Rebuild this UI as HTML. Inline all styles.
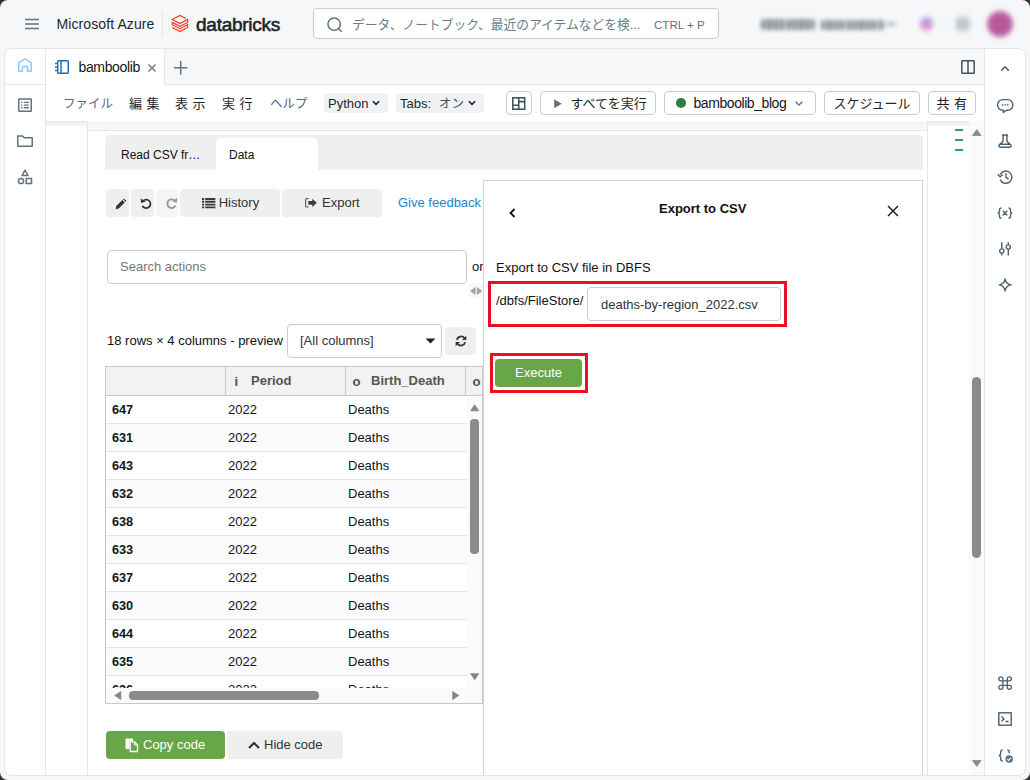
<!DOCTYPE html>
<html lang="ja">
<head>
<meta charset="utf-8">
<title>bamboolib - Databricks</title>
<style>
*{box-sizing:border-box;margin:0;padding:0}
html,body{width:1030px;height:780px;overflow:hidden}
body{background:#333;font-family:"Liberation Sans","Noto Sans CJK JP",sans-serif;color:#11171c;position:relative}
.abs{position:absolute}
#win{position:absolute;left:0;top:0;width:1030px;height:780px;background:#f6f7f9;border-radius:8px;overflow:hidden}
#panel{position:absolute;left:4px;top:48px;width:1022px;height:728px;background:#fff;border:1px solid #e3e7eb;border-radius:8px;overflow:hidden}
.t{position:absolute;white-space:nowrap;line-height:1}
.ui{font-family:"Liberation Sans","Noto Sans CJK JP",sans-serif}
svg{position:absolute;overflow:visible}
.btn{position:absolute;border:1px solid #c3cdd6;border-radius:4px;background:#fff}
.gbtn{position:absolute;background:#efefef;border-radius:4px}
.chip{position:absolute;background:#eff1f3;border-radius:4px}
.row{position:absolute;left:0;width:361px;height:28px;border-bottom:1px solid #dfe6ee}
.row span{position:absolute;top:7px;font-size:13px;line-height:14px;white-space:nowrap}
.row .a{left:6px;font-weight:bold;font-size:12.7px;top:6.6px}
.row .b{left:122px}
.row .c{left:242px}
</style>
</head>
<body>
<div id="win">

<!-- ===== top bar ===== -->
<svg id="e1" style="left:25px;top:18px" width="14" height="12" viewBox="0 0 14 12"><path d="M0 1.500h14M0 6h14M0 10.500h14" stroke="#5f7281" stroke-width="1.500" fill="none"/></svg>
<div class="t" id="msaz" style="left:56.5px;top:17.2px;font-size:14px;color:#1f272d;letter-spacing:0.1px">Microsoft Azure</div>
<div id="e2" class="abs" style="left:162px;top:12px;width:1px;height:24px;background:#e3e7eb"></div>
<svg id="dblogo" style="left:171px;top:14px" width="18" height="19" viewBox="171 14 18 19"><path d="M186 18.600L179.900 15.400L172.200 19.500L179.900 23.500L187.600 19.500V22.400L179.900 26.300L172.200 22.400V24.700L179.900 28.700L187.600 24.700V27.400L179.900 31.500L172.200 27.400" stroke="#ff3621" stroke-width="1.150" fill="none" stroke-linejoin="miter"/></svg>
<div class="t" id="dbtxt" style="left:196px;top:15.2px;font-size:19px;font-weight:normal;color:#1b2329;letter-spacing:-0.25px;-webkit-text-stroke:0.55px #1b2329">databricks</div>

<div id="e3" class="abs" style="left:313px;top:8px;width:406px;height:31px;background:#fff;border:1px solid #c3cdd6;border-radius:4px"></div>
<svg id="e4" style="left:327px;top:17px" width="16" height="16" viewBox="0 0 16 16"><circle cx="7.100" cy="7.100" r="6.200" stroke="#5f7281" stroke-width="1.500" fill="none"/><path d="M11.500 11.500l3.200 3.200" stroke="#5f7281" stroke-width="1.500"/></svg>
<div class="t" id="srch" style="left:352px;top:19px;font-size:12.75px;color:#6b7c8c">データ、ノートブック、最近のアイテムなどを検...</div>
<div class="t" id="ctrlp" style="left:654px;top:18.5px;font-size:11.6px;color:#5f7281">CTRL + P</div>

<!-- blurred workspace name etc -->
<div id="e5" class="abs" style="left:761px;top:18.500px;width:54px;height:11px;border-radius:3px;background:repeating-linear-gradient(90deg,#3d454c 0,#3d454c 4.200px,rgba(61,69,76,0.250) 4.200px,rgba(61,69,76,0.250) 6.400px);filter:blur(2.200px);opacity:.62"></div>
<div id="e5b" class="abs" style="left:821px;top:19.500px;width:64px;height:10px;border-radius:3px;background:repeating-linear-gradient(90deg,#3d454c 0,#3d454c 4.200px,rgba(61,69,76,0.250) 4.200px,rgba(61,69,76,0.250) 6.400px);filter:blur(2.200px);opacity:.6"></div>
<div id="e5c" class="abs" style="left:886px;top:22px;width:10px;height:4px;background:#7d858c;filter:blur(2px);opacity:.5"></div>
<div id="e6" class="abs" style="left:920px;top:16.500px;width:13px;height:14px;border-radius:7px;background:linear-gradient(#9a86f2,#ee7aa0);filter:blur(2.600px);opacity:.8"></div>
<div id="e7" class="abs" style="left:956px;top:16.500px;width:14px;height:14px;border-radius:3px;background:#a9b4c0;filter:blur(2.600px);opacity:.7"></div>
<div id="e8" class="abs" style="left:986.500px;top:10.500px;width:26px;height:26px;border-radius:14px;background:radial-gradient(#b9579a 55%,#cf8ab9);filter:blur(2.600px)"></div>

<!-- ===== main panel ===== -->
<div id="panel"></div>

<!-- left sidebar -->
<div id="e9" class="abs" style="left:45px;top:49px;width:1px;height:726px;background:#e3e7eb"></div>
<div id="e10" class="abs" style="left:5px;top:84px;width:40px;height:1px;background:#e3e7eb"></div>
<svg id="ic-home" style="left:18px;top:58px" width="14" height="14" viewBox="0 0 14 14"><path d="M0.750 13.250V4.700L7 0.800l6.250 3.900v8.550H9.600V8.600H4.400v4.650z" stroke="#8acaff" stroke-width="1.500" fill="none" stroke-linejoin="round"/></svg>
<svg id="ic-list" style="left:18px;top:98px" width="14" height="14" viewBox="0 0 14 14"><rect x="0.750" y="0.950" width="12.500" height="12.300" rx="0.500" stroke="#5f7281" stroke-width="1.500" fill="none"/><path d="M3.200 4.400h1.300M5.800 4.400h5M3.200 7.100h1.300M5.800 7.100h5M3.200 9.800h1.300M5.800 9.800h5" stroke="#5f7281" stroke-width="1.400"/></svg>
<svg id="ic-folder" style="left:17px;top:135px" width="16" height="12" viewBox="0 0 16 12"><path d="M0.750 0.950h4.900l1.600 1.900h8v8.400H0.750z" stroke="#5f7281" stroke-width="1.500" fill="none" stroke-linejoin="round"/></svg>
<svg id="ic-shapes" style="left:17px;top:169px" width="16" height="16" viewBox="0 0 16 16"><path d="M8 1.200l3 5.300H5z" stroke="#5f7281" stroke-width="1.500" fill="none" stroke-linejoin="round"/><circle cx="4" cy="12" r="2.600" stroke="#5f7281" stroke-width="1.500" fill="none"/><rect x="9.200" y="9.500" width="5.300" height="5" stroke="#5f7281" stroke-width="1.500" fill="none"/></svg>

<!-- tab row -->
<div id="e11" class="abs" style="left:164px;top:49px;width:821px;height:36px;background:#f6f7f9;border-bottom:1px solid #e3e7eb;border-left:1px solid #e3e7eb"></div>
<svg id="ic-nb" style="left:55px;top:60px" width="14" height="14" viewBox="0 0 14 14"><rect x="2.750" y="0.750" width="10.500" height="12.500" rx="0.800" stroke="#2272b4" stroke-width="1.500" fill="none"/><path d="M6 1v12M0 3.500h2.500M0 7h2.500M0 10.500h2.500" stroke="#2272b4" stroke-width="1.500"/></svg>
<div class="t" id="tabname" style="left:78.5px;top:60px;font-size:14px;color:#11171c;letter-spacing:-0.35px">bamboolib</div>
<svg id="e12" style="left:148px;top:63.500px" width="8" height="8" viewBox="0 0 8 8"><path d="M0.500 0.500l7 7M7.500 0.500l-7 7" stroke="#5f7281" stroke-width="1.250"/></svg>
<svg id="e13" style="left:174.300px;top:60.500px" width="13.400" height="13.400" viewBox="0 0 13.400 13.400"><path d="M6.700 0v13.400M0 6.700h13.400" stroke="#5f7281" stroke-width="1.500"/></svg>
<svg id="ic-split" style="left:961px;top:60px" width="14" height="14" viewBox="0 0 14 14"><rect x="0.800" y="0.800" width="12.400" height="12.400" rx="0.500" stroke="#445461" stroke-width="1.500" fill="none"/><path d="M7 1v12" stroke="#445461" stroke-width="1.500"/></svg>

<!-- right sidebar -->
<div id="e14" class="abs" style="left:984px;top:49px;width:1px;height:726px;background:#e3e7eb"></div>

<!-- toolbar row -->
<div id="e15" class="abs" style="left:46px;top:121px;width:938px;height:7px;background:linear-gradient(rgba(31,39,45,0.11),rgba(31,39,45,0.03) 60%,rgba(31,39,45,0))"></div>
<div class="t" id="m1" style="left:63px;top:98px;font-size:12.500px;color:#56677a">ファイル</div>
<div class="t" id="m2" style="left:129px;top:97px;font-size:13px;color:#1f272d;letter-spacing:4.5px">編集</div>
<div class="t" id="m3" style="left:175px;top:97px;font-size:13px;color:#1f272d;letter-spacing:4.5px">表示</div>
<div class="t" id="m4" style="left:222px;top:97px;font-size:13px;color:#1f272d;letter-spacing:4.5px">実行</div>
<div class="t" id="m5" style="left:270px;top:97.5px;font-size:12.500px;color:#56677a">ヘルプ</div>
<div id="e16" class="chip" style="left:324px;top:93px;width:64px;height:20px"></div>
<div class="t" id="py" style="left:328px;top:97px;font-size:13px;color:#1f272d">Python</div>
<svg id="e17" style="left:372px;top:100px" width="8" height="6" viewBox="0 0 8 6"><path d="M0.800 1.200l3.200 3.200 3.200-3.200" stroke="#1f272d" stroke-width="1.600" fill="none"/></svg>
<div id="e18" class="chip" style="left:396px;top:93px;width:88px;height:20px"></div>
<div class="t" id="tabs" style="left:400px;top:97px;font-size:13px;color:#1f272d">Tabs:</div><div class="t" id="tabs2" style="left:439px;top:97.5px;font-size:12.5px;color:#445461">オン</div>
<svg id="e19" style="left:468px;top:100px" width="8" height="6" viewBox="0 0 8 6"><path d="M0.800 1.200l3.200 3.200 3.200-3.200" stroke="#1f272d" stroke-width="1.600" fill="none"/></svg>

<div id="e20" class="btn" style="left:506px;top:91px;width:26px;height:24px"></div>
<svg id="e21" style="left:512px;top:96.5px" width="13.500" height="13" viewBox="0 0 13.500 13"><rect x="0.800" y="0.800" width="11.900" height="11.400" stroke="#445461" stroke-width="1.600" fill="none"/><path d="M6.750 1v11M1 8.300h5.750M6.750 4.600h6" stroke="#445461" stroke-width="1.600"/></svg>
<div id="e22" class="btn" style="left:540px;top:91px;width:116px;height:24px"></div>
<svg id="e23" style="left:554px;top:98.5px" width="8" height="9.500" viewBox="0 0 8 9.500"><path d="M0.200 0.300l7.600 4.450-7.600 4.450z" fill="#5f7281"/></svg>
<div class="t" id="runall" style="left:570.5px;top:97px;font-size:13px;color:#1f272d">すべてを実行</div>
<div id="e24" class="btn" style="left:664px;top:91px;width:152px;height:24px"></div>
<div id="e25" class="abs" style="left:676.3px;top:98.3px;width:9.4px;height:9.4px;border-radius:5px;background:#2d7d46"></div>
<div class="t" id="clus" style="left:693.5px;top:96px;font-size:14px;color:#11171c;letter-spacing:-0.43px">bamboolib_blog</div>
<svg id="e26" style="left:795px;top:101px" width="8" height="5" viewBox="0 0 8 5"><path d="M0.700 0.700l3.300 3.300 3.300-3.300" stroke="#5f7281" stroke-width="1.300" fill="none"/></svg>
<div id="e27" class="btn" style="left:824px;top:91px;width:96px;height:24px"></div>
<div class="t" id="sched" style="left:833.5px;top:97px;font-size:13px;color:#1f272d">スケジュール</div>
<div id="e28" class="btn" style="left:928px;top:91px;width:48px;height:24px"></div>
<div class="t" id="share" style="left:936.5px;top:97px;font-size:13px;color:#11171c;letter-spacing:4.5px">共有</div>

<!-- notebook area -->
<div id="e29" class="abs" style="left:88px;top:121px;width:839px;height:10px;background:#f6f7f9"></div>
<div id="e30" class="abs" style="left:87px;top:121px;width:1px;height:654px;background:#e3e7eb"></div>
<div id="e31" class="abs" style="left:88px;top:130px;width:839px;height:1px;background:#e3e7eb"></div>

<div id="e33" class="abs" style="left:927px;top:121px;width:1px;height:654px;background:#e3e7eb"></div>
<div id="e34" class="abs" style="left:969px;top:121px;width:15px;height:654px;background:#fafafa"></div>
<!-- minimap marks -->
<div id="e35" class="abs" style="left:955px;top:129px;width:8px;height:2px;background:#2ba05a"></div>
<div id="e36" class="abs" style="left:955px;top:139px;width:8px;height:2px;background:#2ba05a"></div>
<div id="e37" class="abs" style="left:955px;top:149px;width:8px;height:2px;background:#2ba05a"></div>
<!-- notebook scrollbar -->
<svg id="e38" style="left:971.700px;top:129px" width="9.600" height="7" viewBox="0 0 9.600 7"><path d="M4.800 0.600l4.300 5.900h-8.600z" fill="#8a8a8a" stroke="#8a8a8a" stroke-width="0.800" stroke-linejoin="round"/></svg>
<div id="e39" class="abs" style="left:972px;top:377px;width:9px;height:181px;border-radius:5px;background:#8b8b8b"></div>
<svg id="e40" style="left:971.700px;top:760px" width="9.600" height="7" viewBox="0 0 9.600 7"><path d="M4.800 6.400l4.300-5.900h-8.600z" fill="#8a8a8a" stroke="#8a8a8a" stroke-width="0.800" stroke-linejoin="round"/></svg>

<!-- bamboolib widget -->
<div id="e41" class="abs" style="left:105px;top:135px;width:818px;height:35px;background:#efefef;border-radius:5px 5px 0 0"></div>
<div id="e42" class="abs" style="left:216px;top:138px;width:102px;height:32px;background:#fff;border-radius:5px 5px 0 0"></div>
<div class="t" id="tb1" style="left:121px;top:149px;font-size:12px;color:#111">Read CSV fr…</div>
<div class="t" id="tb2" style="left:229px;top:149px;font-size:12px;color:#111">Data</div>

<div id="e43" class="gbtn" style="left:106px;top:189px;width:23px;height:28px"></div>
<div id="e44" class="gbtn" style="left:131px;top:189px;width:23px;height:28px"></div>
<div id="e45" class="gbtn" style="left:156px;top:189px;width:22px;height:28px;background:#f5f5f5"></div>
<div id="e46" class="gbtn" style="left:180px;top:189px;width:100px;height:28px"></div>
<div id="e47" class="gbtn" style="left:282px;top:189px;width:100px;height:28px"></div>
<svg id="ic-pencil" style="left:115.3px;top:197.6px" width="12" height="11.6" viewBox="0 0 13 13"><path d="M0.500 12.500l0.700-3.400 6.800-6.800 2.700 2.700-6.800 6.800zM8.800 1.500l1-1 2.700 2.700-1 1z" fill="#333"/></svg>
<svg id="ic-undo" style="left:139.8px;top:196.6px" width="13" height="13" viewBox="0 0 14 14"><path d="M3.300 4.200A4.600 4.600 0 1 1 2.600 9.500" stroke="#333" stroke-width="1.900" fill="none"/><path d="M0.800 1.500l0.300 5 4.800-1.300z" fill="#333"/></svg>
<svg id="ic-redo" style="left:164.700px;top:197px" width="13" height="13" viewBox="0 0 13 13"><path d="M9.700 3.600A4.300 4.300 0 1 0 10.500 8.600" stroke="#999" stroke-width="1.900" fill="none"/><path d="M12.200 0.800l-0.300 4.900-4.700-1.300z" fill="#999"/></svg>
<svg id="ic-hist" style="left:201.600px;top:197.600px" width="13.400" height="10.400" viewBox="0 0 13.400 10.400"><path d="M0 1h2.200M3.200 1h10.200M0 3.800h2.200M3.200 3.800h10.200M0 6.600h2.200M3.200 6.600h10.200M0 9.400h2.200M3.200 9.400h10.200" stroke="#3a3a3a" stroke-width="1.900"/></svg>
<div class="t" id="hist" style="left:218.7px;top:196px;font-size:13px;color:#333">History</div>
<svg id="ic-exp" style="left:305.100px;top:198.400px" width="12" height="9.600" viewBox="0 0 12 9.600"><path d="M3.600 0.600H1.600a1 1 0 0 0-1 1v6.400a1 1 0 0 0 1 1H3.600" stroke="#5a5a5a" stroke-width="1.150" fill="none"/><path d="M3.300 2.900h4V0.700l4.500 4.100-4.500 4.100V6.700h-4z" fill="#3d3d3d"/></svg>
<div class="t" id="exp" style="left:322px;top:196px;font-size:13px;color:#333">Export</div>
<div class="t" id="fb" style="left:398px;top:196px;font-size:13px;color:#1a84c7">Give feedback</div>

<div id="e48" class="abs" style="left:107px;top:250px;width:360px;height:34px;border:1px solid #ccc;border-radius:4px;background:#fff"></div>
<div class="t" id="sa" style="left:120px;top:260px;font-size:13px;color:#777">Search actions</div>
<div class="t" id="or" style="left:472px;top:260px;font-size:13px;color:#111">or</div>
<div id="e49b" class="abs" style="left:469px;top:283px;width:14px;height:15px;background:#f8f8f8"></div><svg id="e49" style="left:469.800px;top:287px" width="12.400" height="8" viewBox="0 0 12.400 8"><path d="M0.500 4l4.700-3.400v6.800zM11.900 4l-4.700-3.400v6.800z" fill="#a3a3a3" stroke="#a3a3a3" stroke-width="0.600" stroke-linejoin="round"/></svg>

<div class="t" id="rows" style="left:107px;top:334px;font-size:13px;color:#111">18 rows × 4 columns - preview</div>
<div id="e50" class="abs" style="left:287px;top:324px;width:155px;height:34px;border:1px solid #ccc;border-radius:4px;background:#fff"></div>
<div class="t" id="allc" style="left:300px;top:334px;font-size:13px;color:#333">[All columns]</div>
<svg id="e51" style="left:425px;top:338px" width="11" height="6" viewBox="0 0 11 6"><path d="M0.500 0.500h10l-5 5z" fill="#222"/></svg>
<div id="e52" class="gbtn" style="left:445px;top:327px;width:31px;height:28px"></div>
<svg id="ic-ref" style="left:454.5px;top:335.2px" width="12" height="12" viewBox="0 0 13 13"><path d="M2 5.200A4.700 4.700 0 0 1 10.300 3.400M11 7.800A4.700 4.700 0 0 1 2.700 9.600" stroke="#333" stroke-width="1.900" fill="none"/><path d="M12.300 0.800v4.700H7.600zM0.700 12.200V7.500h4.700z" fill="#333"/></svg>

<!-- table -->
<div id="tbl" class="abs" style="left:105px;top:366px;width:378px;height:338px;border:1px solid #c8c8c8;background:#fff;overflow:hidden">
  <div id="e53" class="abs" style="left:0;top:0;width:376px;height:29px;background:#f2f2f2;border-bottom:1px solid #c8c8c8"></div>
  <div id="e54" class="abs" style="left:119px;top:0;width:1px;height:29px;background:#c8c8c8"></div>
  <div id="e55" class="abs" style="left:239px;top:0;width:1px;height:29px;background:#c8c8c8"></div>
  <div id="e56" class="abs" style="left:359px;top:0;width:1px;height:29px;background:#c8c8c8"></div>
  <div id="e57" class="t" style="left:128.5px;top:8px;font-size:13px;color:#505050;font-weight:bold">i</div>
  <div id="e58" class="t" style="left:145px;top:7px;font-size:13px;color:#565656;font-weight:bold">Period</div>
  <div id="e59" class="t" style="left:246.5px;top:8px;font-size:13px;color:#505050;font-weight:bold">o</div>
  <div id="e60" class="t" style="left:265px;top:7px;font-size:13px;color:#565656;font-weight:bold">Birth_Death</div>
  <div id="e61" class="t" style="left:366.5px;top:8px;font-size:13px;color:#505050;font-weight:bold">o</div>
  <div id="rowsbox" class="abs" style="left:0;top:29px;width:361px;height:293px;overflow:hidden">
    <div id="e62" class="row" style="top:0"><span class="a">647</span><span class="b">2022</span><span class="c">Deaths</span></div>
    <div id="e63" class="row" style="top:28px;background:#fafafa"><span class="a">631</span><span class="b">2022</span><span class="c">Deaths</span></div>
    <div id="e64" class="row" style="top:56px"><span class="a">643</span><span class="b">2022</span><span class="c">Deaths</span></div>
    <div id="e65" class="row" style="top:84px;background:#fafafa"><span class="a">632</span><span class="b">2022</span><span class="c">Deaths</span></div>
    <div id="e66" class="row" style="top:112px"><span class="a">638</span><span class="b">2022</span><span class="c">Deaths</span></div>
    <div id="e67" class="row" style="top:140px;background:#fafafa"><span class="a">633</span><span class="b">2022</span><span class="c">Deaths</span></div>
    <div id="e68" class="row" style="top:168px"><span class="a">637</span><span class="b">2022</span><span class="c">Deaths</span></div>
    <div id="e69" class="row" style="top:196px;background:#fafafa"><span class="a">630</span><span class="b">2022</span><span class="c">Deaths</span></div>
    <div id="e70" class="row" style="top:224px"><span class="a">644</span><span class="b">2022</span><span class="c">Deaths</span></div>
    <div id="e71" class="row" style="top:252px;background:#fafafa"><span class="a">635</span><span class="b">2022</span><span class="c">Deaths</span></div>
    <div id="e72" class="row" style="top:280px"><span class="a">636</span><span class="b">2022</span><span class="c">Deaths</span></div>
  </div>
  <!-- v scrollbar -->
  <div id="vtrack" class="abs" style="left:361px;top:30px;width:15px;height:293px;background:#fafafa"></div><div id="htrack" class="abs" style="left:0;top:321px;width:376px;height:15px;background:#fafafa"></div>
  <svg id="e73" style="left:364px;top:36.500px" width="9.400" height="7.500" viewBox="0 0 9.400 7.500"><path d="M4.700 0.700l4.100 6.100h-8.200z" fill="#858585" stroke="#858585" stroke-width="0.700" stroke-linejoin="round"/></svg>
  <div id="e74" class="abs" style="left:364.2px;top:52px;width:8.6px;height:135px;border-radius:4px;background:#8b8b8b"></div>
  <svg id="e75" style="left:364px;top:306px" width="9.400" height="7.500" viewBox="0 0 9.400 7.500"><path d="M4.700 6.800l4.100-6.100h-8.200z" fill="#858585" stroke="#858585" stroke-width="0.700" stroke-linejoin="round"/></svg>
  <!-- h scrollbar -->
  <svg id="e76" style="left:8px;top:324px" width="7.500" height="9" viewBox="0 0 7.500 9"><path d="M0.600 4.500l6.300-4v8z" fill="#858585" stroke="#858585" stroke-width="0.700" stroke-linejoin="round"/></svg>
  <div id="e77" class="abs" style="left:23px;top:324px;width:190px;height:9px;border-radius:4px;background:#8b8b8b"></div>
  <svg id="e78" style="left:346px;top:324px" width="7.500" height="9" viewBox="0 0 7.500 9"><path d="M6.900 4.500l-6.300-4v8z" fill="#858585" stroke="#858585" stroke-width="0.700" stroke-linejoin="round"/></svg>
</div>

<div id="e79" class="abs" style="left:106px;top:731px;width:119px;height:28px;border-radius:4px;background:#68a64a"></div>
<svg id="ic-copy" style="left:125px;top:738px" width="13" height="14" viewBox="0 0 13 14"><path d="M0.500 0.500h7.500v2.500h-3.500v8h-4z" fill="#fff"/><path d="M5.300 3.800h4.200l3 3v6.700H5.300z" fill="none" stroke="#fff" stroke-width="1.300"/><path d="M9.300 4v3h3" fill="none" stroke="#fff" stroke-width="1"/></svg>
<div class="t" id="cc" style="left:143px;top:738px;font-size:13px;color:#fff">Copy code</div>
<div id="e80" class="gbtn" style="left:227px;top:731px;width:116px;height:28px"></div>
<svg id="e81" style="left:248px;top:741px" width="12" height="8" viewBox="0 0 12 8"><path d="M1 7l5-5 5 5" stroke="#333" stroke-width="2.200" fill="none"/></svg>
<div class="t" id="hc" style="left:264px;top:738px;font-size:13px;color:#333">Hide code</div>

<!-- export side panel -->
<div class="abs" id="side" style="left:483px;top:180px;width:440px;height:595px;background:#fff;border:1px solid #cfd6dd;border-bottom:none"></div>
<svg id="e82" style="left:509px;top:208px" width="7" height="10" viewBox="0 0 7 10"><path d="M5.500 1l-4 4 4 4" stroke="#111" stroke-width="1.800" fill="none"/></svg>
<div class="t" id="etitle" style="left:659px;top:202px;font-size:13px;font-weight:bold;color:#111">Export to CSV</div>
<svg id="e83" style="left:887px;top:205px" width="12" height="12" viewBox="0 0 12 12"><path d="M1 1l10 10M11 1l-10 10" stroke="#111" stroke-width="1.400"/></svg>
<div class="t" id="elab" style="left:496px;top:261px;font-size:13px;color:#111">Export to CSV file in DBFS</div>
<div id="e84" class="abs" style="left:488px;top:281px;width:299px;height:46px;border:3px solid #e81123"></div>
<div class="t" id="epath" style="left:496px;top:294px;font-size:13px;color:#111">/dbfs/FileStore/</div>
<div id="e85" class="abs" style="left:587px;top:287px;width:194px;height:34px;border:1px solid #ccc;border-radius:4px;background:#fff"></div>
<div class="t" id="efile" style="left:601px;top:298px;font-size:13px;color:#333">deaths-by-region_2022.csv</div>
<div id="e86" class="abs" style="left:490px;top:353px;width:98px;height:40px;border:3px solid #e81123"></div>
<div id="e87" class="abs" style="left:495px;top:359px;width:87px;height:28px;border-radius:4px;background:#68a64a"></div>
<div class="t" id="exe" style="left:515px;top:366px;font-size:13px;color:#fff">Execute</div>

<!-- right sidebar icons -->
<svg id="r1" style="left:1000px;top:65px" width="10" height="7" viewBox="0 0 10 7"><path d="M1.200 5.600l3.800-3.800 3.800 3.800" stroke="#4f6273" stroke-width="1.500" fill="none"/></svg>
<svg id="r2" style="left:997px;top:97px" width="17" height="16" viewBox="997 97 17 16"><path d="M1003.300 110.200h-0.500a5.300 5.300 0 0 1 0-10.600h4.800a5.300 5.300 0 0 1 0 10.600h-1.300l-3 2.200z" stroke="#4f6273" stroke-width="1.400" fill="none" stroke-linejoin="round"/><circle cx="1002.600" cy="104.900" r="0.800" fill="#4f6273"/><circle cx="1005.200" cy="104.900" r="0.800" fill="#4f6273"/><circle cx="1007.800" cy="104.900" r="0.800" fill="#4f6273"/></svg>
<svg id="r3" style="left:997px;top:133px" width="16" height="16" viewBox="997 133 16 16"><path d="M1002 134.900h6M1003.100 135v5.300c0 1-0.500 1.600-1.300 2.300l-2.300 2c-1.200 1.100-0.700 2.600 0.900 2.600h9.200c1.600 0 2.100-1.500 0.900-2.600l-2.300-2c-0.800-0.700-1.300-1.300-1.300-2.300V135M999.300 144.300h11.400" stroke="#4f6273" stroke-width="1.450" fill="none" stroke-linejoin="round"/></svg>
<svg id="r4" style="left:997px;top:169px" width="17" height="16" viewBox="997 169 17 16"><path d="M1000.300 174.600A6.100 6.100 0 1 1 1000.200 179.600" stroke="#4f6273" stroke-width="1.450" fill="none"/><path d="M997.800 174.200l2.300 2.600 2.700-2" stroke="#4f6273" stroke-width="1.400" fill="none"/><path d="M1006 173.300v4l2.500 1.800" stroke="#4f6273" stroke-width="1.400" fill="none"/></svg>
<svg id="r5" style="left:996px;top:206px" width="18" height="14" viewBox="996 206 18 14"><path d="M1001.400 208c-1.500 0-1.900 0.700-1.900 1.800v1.500c0 1-0.500 1.600-1.700 1.800 1.200 0.200 1.700 0.800 1.700 1.800v1.500c0 1.100 0.400 1.800 1.900 1.800M1008.600 208c1.500 0 1.900 0.700 1.900 1.800v1.500c0 1 0.500 1.600 1.700 1.800-1.200 0.200-1.700 0.800-1.700 1.800v1.500c0 1.100-0.400 1.800-1.900 1.800M1002.700 210.800l4.600 4.600M1007.300 210.800l-4.600 4.600" stroke="#4f6273" stroke-width="1.400" fill="none"/></svg>
<svg id="r6" style="left:998px;top:241px" width="14" height="16" viewBox="998 241 14 16"><path d="M1001.800 242.200v6.500M1001.800 253.300v2.300M1008.300 242.200v2.500M1008.300 249.300v6.300" stroke="#4f6273" stroke-width="1.450"/><circle cx="1001.800" cy="251" r="2.100" stroke="#4f6273" stroke-width="1.400" fill="none"/><circle cx="1008.300" cy="247" r="2.100" stroke="#4f6273" stroke-width="1.400" fill="none"/></svg>
<svg id="r7" style="left:997px;top:277px" width="16" height="16" viewBox="997 277 16 16"><path d="M1005.100 278.900c0.600 3.600 2.200 5.400 5.900 6-3.700 0.600-5.300 2.400-5.900 6-0.600-3.600-2.200-5.400-5.900-6 3.700-0.600 5.300-2.400 5.900-6z" stroke="#4f6273" stroke-width="1.450" fill="none" stroke-linejoin="round"/></svg>
<svg id="r8" style="left:997px;top:675px" width="16" height="16" viewBox="997 675 16 16"><path d="M1002.900 680.900h4.400v4.400h-4.400zM1002.900 680.900v-2.050a2.050 2.050 0 1 0-2.050 2.050zM1007.300 680.900h2.050a2.050 2.050 0 1 0-2.050-2.050zM1007.300 685.300v2.050a2.050 2.050 0 1 0 2.050-2.050zM1002.900 685.300h-2.050a2.050 2.050 0 1 0 2.050 2.050z" stroke="#4f6273" stroke-width="1.350" fill="none"/></svg>
<svg id="r9" style="left:998px;top:712px" width="14" height="14" viewBox="0 0 14 14"><rect x="0.800" y="0.800" width="12.400" height="12.400" stroke="#566879" stroke-width="1.500" fill="none"/><path d="M3.500 4.500l2.500 2.500-2.500 2.500M7.500 9.500h3" stroke="#445461" stroke-width="1.300" fill="none"/></svg>
<svg id="r10" style="left:997px;top:748px" width="17" height="16" viewBox="997 748 17 16"><path d="M1002.800 749.900c-1.600 0-2.100 0.800-2.100 2v1.700c0 1-0.500 1.700-1.800 1.900 1.300 0.200 1.800 0.900 1.800 1.900v1.700c0 1.200 0.500 2 2.100 2M1007.200 749.900c1.600 0 2.100 0.800 2.100 2v1.600" stroke="#4f6273" stroke-width="1.400" fill="none"/><circle cx="1009.200" cy="759" r="3.800" fill="#5f7281"/><path d="M1007.400 759.100l1.300 1.300 2.300-2.600" stroke="#fff" stroke-width="1.200" fill="none"/></svg>

</div>
</body>
</html>
